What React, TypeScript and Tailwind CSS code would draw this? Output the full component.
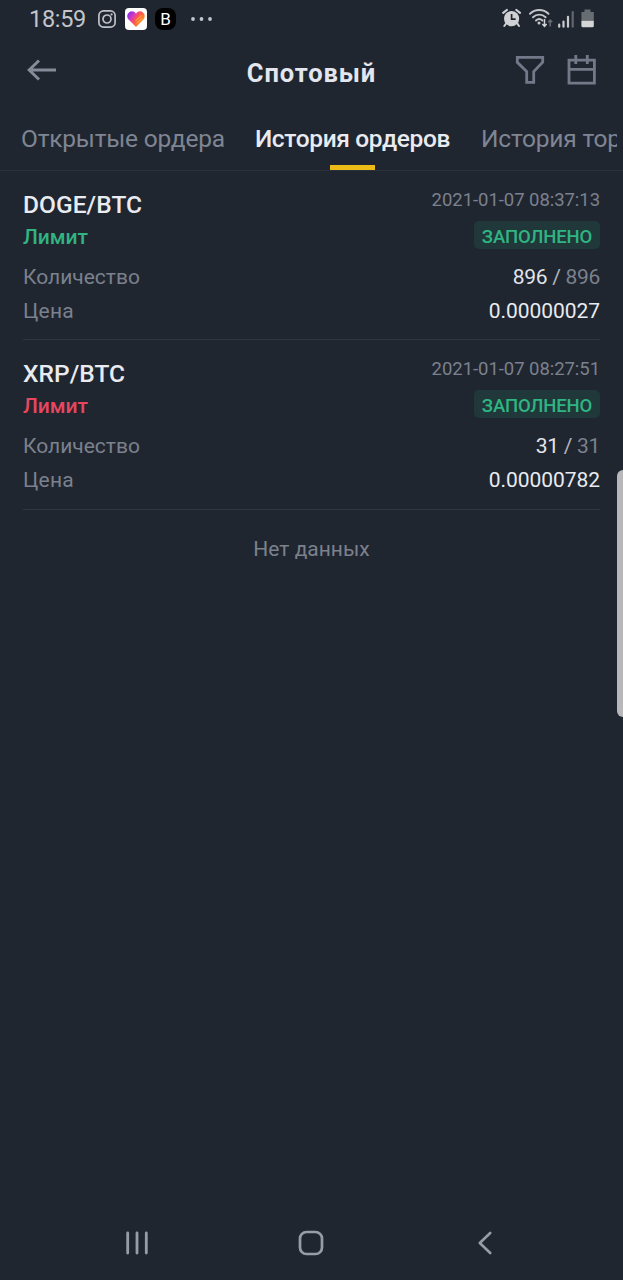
import React from 'react';

type Order = {
  pair: string;
  side: 'buy' | 'sell';
  time: string;
  filled: string;
  total: string;
  price: string;
};

const orders: Order[] = [
  { pair: 'DOGE/BTC', side: 'buy', time: '2021-01-07 08:37:13', filled: '896', total: '896', price: '0.00000027' },
  { pair: 'XRP/BTC', side: 'sell', time: '2021-01-07 08:27:51', filled: '31', total: '31', price: '0.00000782' },
];

function StatusBar() {
  return (
    <div className="flex h-[38px] items-center justify-between pl-[29px] pr-[28px]">
      <div className="flex items-center">
        <span className="w-[69px] whitespace-nowrap text-[23.5px] leading-[38px] tracking-[-0.3px] text-[#c3c5ca]">18:59</span>
        <svg className="h-[18px] w-[18px]" viewBox="0 0 18 18" fill="none" stroke="#bfc1c6" strokeWidth="1.7">
          <rect x="0.9" y="0.9" width="16.2" height="16.2" rx="4.6" />
          <circle cx="9" cy="9" r="4" />
          <circle cx="13.6" cy="4.4" r="1.1" fill="#bfc1c6" stroke="none" />
        </svg>
        <svg className="ml-[9px] h-[22px] w-[22px]" viewBox="0 0 22 22">
          <defs>
            <linearGradient id="heart" x1="0" y1="0.2" x2="1" y2="0.8">
              <stop offset="0" stopColor="#8a2be8" />
              <stop offset="0.28" stopColor="#d33bc0" />
              <stop offset="0.48" stopColor="#ff5257" />
              <stop offset="0.72" stopColor="#ff7a2e" />
              <stop offset="1" stopColor="#ffb52e" />
            </linearGradient>
          </defs>
          <rect width="22" height="22" rx="4" fill="#fff" />
          <path d="M11 19 3.8 11.8C1.6 9.5 1.8 6.1 4 4.4c2.2-1.8 5.3-1.2 7 1.3 1.7-2.5 4.8-3.1 7-1.3 2.2 1.7 2.4 5.1.2 7.4Z" fill="url(#heart)" />
          <path d="m11 12.5 5-4.500M12 15l5-4.500" stroke="#ffc43a" strokeWidth="1.2" strokeLinecap="round" opacity=".6" />
        </svg>
        <span className="ml-[8px] flex h-[22px] w-[21px] items-center justify-center rounded-[8px] bg-black text-[17px] leading-none text-white">B</span>
        <svg className="ml-[15px] h-[4px] w-[22px]" viewBox="0 0 22 4" fill="#c3c5ca">
          <circle cx="2" cy="2" r="1.9" />
          <circle cx="10.500" cy="2" r="1.9" />
          <circle cx="19" cy="2" r="1.9" />
        </svg>
      </div>
      <svg className="h-[22px] w-[94px]" viewBox="501 8 94 22" fill="none">
        <g>
          <path d="m506.500 23-2.200 3M517 23l2 3" stroke="#d0d1d4" strokeWidth="2" strokeLinecap="round" />
          <path d="m503.200 12.800 3.600-2.800M520 12.800l-3.600-2.800" stroke="#d0d1d4" strokeWidth="2.200" strokeLinecap="round" />
          <circle cx="511.600" cy="18.700" r="7.600" fill="#d0d1d4" />
          <path d="M511.600 14v5.200h4" stroke="#202630" strokeWidth="1.700" />
        </g>
        <g stroke="#c5c7cb" strokeWidth="1.900" strokeLinecap="round">
          <path d="M530 13.800c5.200-5 13.300-5 18.500 0" />
          <path d="M533 17.300c3.600-3.500 9-3.500 12.600 0" />
          <path d="M536 20.500c1.900-1.700 4.500-1.700 6.400 0" />
        </g>
        <circle cx="539" cy="23" r="1.500" fill="#c5c7cb" />
        <path d="M544.500 19v7M542.400 24l2.100 2.300 2.100-2.300" stroke="#d0d1d4" strokeWidth="1.500" />
        <path d="M550.200 26.500v-6M548.200 22.300l2-2.200 2 2.200" stroke="#666b73" strokeWidth="1.500" />
        <path d="M559.200 24.700v2M563.500 21.500v5.200M568 16.800v9.900" stroke="#c9cacd" strokeWidth="2.200" strokeLinecap="round" />
        <path d="M572.700 12v14.700" stroke="#62666e" strokeWidth="2.200" strokeLinecap="round" />
        <path d="M584.500 9.500h6V12h3.300v8.700h-12.400V12h3.100Z" fill="#686c73" />
        <path d="M581.400 20.700h12.400v5.100q0 1.500-1.500 1.500h-9.400q-1.500 0-1.500-1.500Z" fill="#d5d5d6" />
      </svg>
    </div>
  );
}

function Header() {
  return (
    <header className="flex h-[68px] items-center justify-between pl-[27px] pr-[27px]">
      <svg className="mb-[4px] h-[22px] w-[81px]" viewBox="0 0 81 22" fill="none" stroke="#848b99" strokeWidth="3">
        <path d="M29 11H2M12 1.500 2.200 11l9.800 9.500" />
      </svg>
      <h1 className="mt-[2px] whitespace-nowrap text-[25.5px] font-bold leading-[30px] tracking-[0.900px] text-[#e3e6ee]">Спотовый</h1>
      <div className="mb-[5px] flex gap-[22px] text-[#727a89]">
        <svg className="h-[30px] w-[30px]" viewBox="0 0 30 30" fill="none" stroke="currentColor" strokeWidth="2.800">
          <path d="M2.300 2.300h25.400v5l-9 9.200v10.800h-7V16.500l-9.400-9.200Z" />
        </svg>
        <svg className="h-[30px] w-[29px]" viewBox="0 0 29 30" fill="none" stroke="currentColor" strokeWidth="2.800">
          <path d="M2 5.200h25.400v23H2ZM2 14.300h25.400M8.800 0v9M20.300 0v9" />
        </svg>
      </div>
    </header>
  );
}

function Tabs() {
  return (
    <nav className="mr-[6px] flex h-[64px] overflow-hidden whitespace-nowrap pl-[21px] text-[24.5px] leading-[65px] text-[#7f8592]">
      <span className="w-[233px] shrink-0 tracking-[-0.2px]">Открытые ордера</span>
      <span className="flex w-[197px] shrink-0 flex-col items-center text-[#e9ebf1]">
        <span className="h-[59px] font-medium tracking-[-0.35px]">История ордеров</span>
        <span className="h-[5px] w-[45px] bg-[#edbb17]" />
      </span>
      <span className="ml-[30px] shrink-0 tracking-[-0.2px]">История торговли</span>
    </nav>
  );
}

function OrderCard({ order }: { order: Order }) {
  return (
    <article className="mx-[23px] flex h-[169px] flex-col border-b border-[#303640] pt-[18px] text-[21px] last-of-type:h-[170px]">
      <div className="flex h-[71px] justify-between">
        <div className="flex flex-col">
          <span className="h-[32px] text-[24.5px] font-medium leading-[32px] tracking-[0.05px] text-[#e9ebf1]">{order.pair}</span>
          <span className={order.side === 'buy' ? 'font-medium leading-[32px] text-[#32b482]' : 'font-medium leading-[32px] text-[#e8465f]'}>Лимит</span>
        </div>
        <div className="flex flex-col items-end">
          <time className="mt-[-2px] h-[34px] whitespace-nowrap text-[18.5px] leading-[26px] tracking-[-0.05px] text-[#7b818d]">{order.time}</time>
          <span className="flex h-[28px] w-[126px] items-center justify-center rounded-[5px] bg-[#20383a] pt-[4px] text-[18.5px] font-medium leading-[24px] tracking-[-0.15px] text-[#2fb583]">ЗАПОЛНЕНО</span>
        </div>
      </div>
      <div className="flex h-[36px] items-center justify-between text-[#7b818d]">
        <span>Количество</span>
        <span className="tracking-[-0.3px]"><span className="text-[#e2e5ec]">{order.filled}</span><span className="text-[#b0b4bc]"> / </span>{order.total}</span>
      </div>
      <div className="flex h-[32px] items-center justify-between text-[#7b818d]">
        <span className="tracking-[0.2px]">Цена</span>
        <span className="tracking-[-0.05px] text-[#e9ebf1]">{order.price}</span>
      </div>
    </article>
  );
}

export default function App() {
  return (
    <div className="relative flex h-[1280px] w-[623px] flex-col overflow-hidden bg-[#202630] font-[Roboto,sans-serif]">
      <StatusBar />
      <Header />
      <Tabs />
      <div className="h-px shrink-0 bg-[#2b313b]" />
      <main className="flex-1">
        {orders.map((o) => <OrderCard key={o.pair} order={o} />)}
        <p className="pt-[23px] text-center text-[21px] leading-[32px] text-[#7b818d]">Нет данных</p>
      </main>
      <footer className="flex h-[74px] items-center pl-[125px] text-[#989ca5]">
        <svg className="h-[26px] w-[24px]" viewBox="0 0 24 26" fill="none" stroke="currentColor" strokeWidth="2.800" strokeLinecap="round">
          <path d="M2.700 3v20M12 3v20M21.300 3v20" />
        </svg>
        <svg className="ml-[149px] h-[26px] w-[26px]" viewBox="0 0 26 26" fill="none" stroke="currentColor" strokeWidth="2.700">
          <rect x="2" y="2" width="22" height="22" rx="6.500" />
        </svg>
        <svg className="ml-[154px] h-[26px] w-[14px]" viewBox="0 0 14 26" fill="none" stroke="currentColor" strokeWidth="2.600" strokeLinecap="round" strokeLinejoin="round">
          <path d="M12.200 3 1.800 13l10.400 10" />
        </svg>
      </footer>
      <div className="absolute right-0 top-[470px] h-[247px] w-[6px] rounded-l-[6px] bg-[#b8b8ba]" />
    </div>
  );
}
